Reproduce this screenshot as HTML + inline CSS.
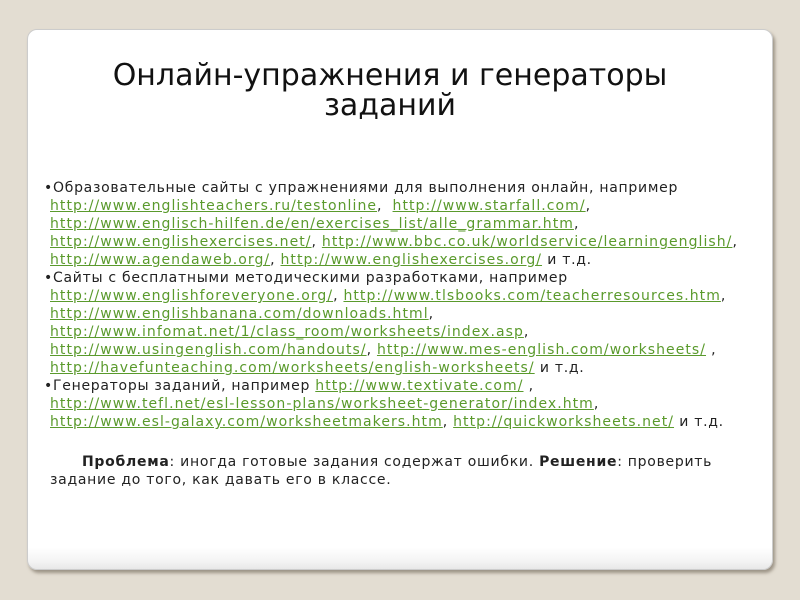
<!DOCTYPE html>
<html><head><meta charset="utf-8"><style>
html,body{margin:0;padding:0;width:800px;height:600px;background:#e3ddd2;overflow:hidden}
.card{position:absolute;left:27px;top:29px;width:746px;height:541px;background:linear-gradient(#fff 0,#fff 96%,#f4f4f4 98.5%,#e8e8e8 100%);border-radius:10px;box-shadow:2px 3px 3px rgba(110,100,85,.6);border:1px solid #ccc;box-sizing:border-box}
.t{position:absolute;left:0;width:780px;text-align:center;font-family:"DejaVu Sans",sans-serif;font-size:30px;color:#111;line-height:30px;top:61px}
.b{position:absolute;left:44px;top:179px;font-family:"DejaVu Sans",sans-serif;font-size:14px;letter-spacing:0.72px;line-height:18px;color:#222;white-space:nowrap}
.b div{height:18px}
.i{padding-left:6px}
a{color:#5a9a2c;text-decoration:underline;letter-spacing:1.05px}
</style></head><body>
<div class="card"></div>
<div class="t">Онлайн-упражнения и генераторы<br>заданий</div>
<div class="b">
<div>•Образовательные сайты с упражнениями для выполнения онлайн, например</div>
<div class="i"><a>http://www.englishteachers.ru/testonline</a>, &nbsp;<a>http://www.starfall.com/</a>,</div>
<div class="i"><a>http://www.englisch-hilfen.de/en/exercises_list/alle_grammar.htm</a>,</div>
<div class="i"><a>http://www.englishexercises.net/</a>, <a>http://www.bbc.co.uk/worldservice/learningenglish/</a>,</div>
<div class="i"><a>http://www.agendaweb.org/</a>, <a>http://www.englishexercises.org/</a> и т.д.</div>
<div>•Сайты с бесплатными методическими разработками, например</div>
<div class="i"><a>http://www.englishforeveryone.org/</a>, <a>http://www.tlsbooks.com/teacherresources.htm</a>,</div>
<div class="i"><a>http://www.englishbanana.com/downloads.html</a>,</div>
<div class="i"><a>http://www.infomat.net/1/class_room/worksheets/index.asp</a>,</div>
<div class="i"><a>http://www.usingenglish.com/handouts/</a>, <a>http://www.mes-english.com/worksheets/</a> ,</div>
<div class="i"><a>http://havefunteaching.com/worksheets/english-worksheets/</a> и т.д.</div>
<div>•Генераторы заданий, например <a>http://www.textivate.com/</a> ,</div>
<div class="i"><a>http://www.tefl.net/esl-lesson-plans/worksheet-generator/index.htm</a>,</div>
<div class="i"><a>http://www.esl-galaxy.com/worksheetmakers.htm</a>, <a>http://quickworksheets.net/</a> и т.д.</div>
<div style="height:22px"></div>
<div class="i" style="padding-left:38px"><b>Проблема</b>: иногда готовые задания содержат ошибки. <b>Решение</b>: проверить</div>
<div class="i">задание до того, как давать его в классе.</div>
</div>
</body></html>
